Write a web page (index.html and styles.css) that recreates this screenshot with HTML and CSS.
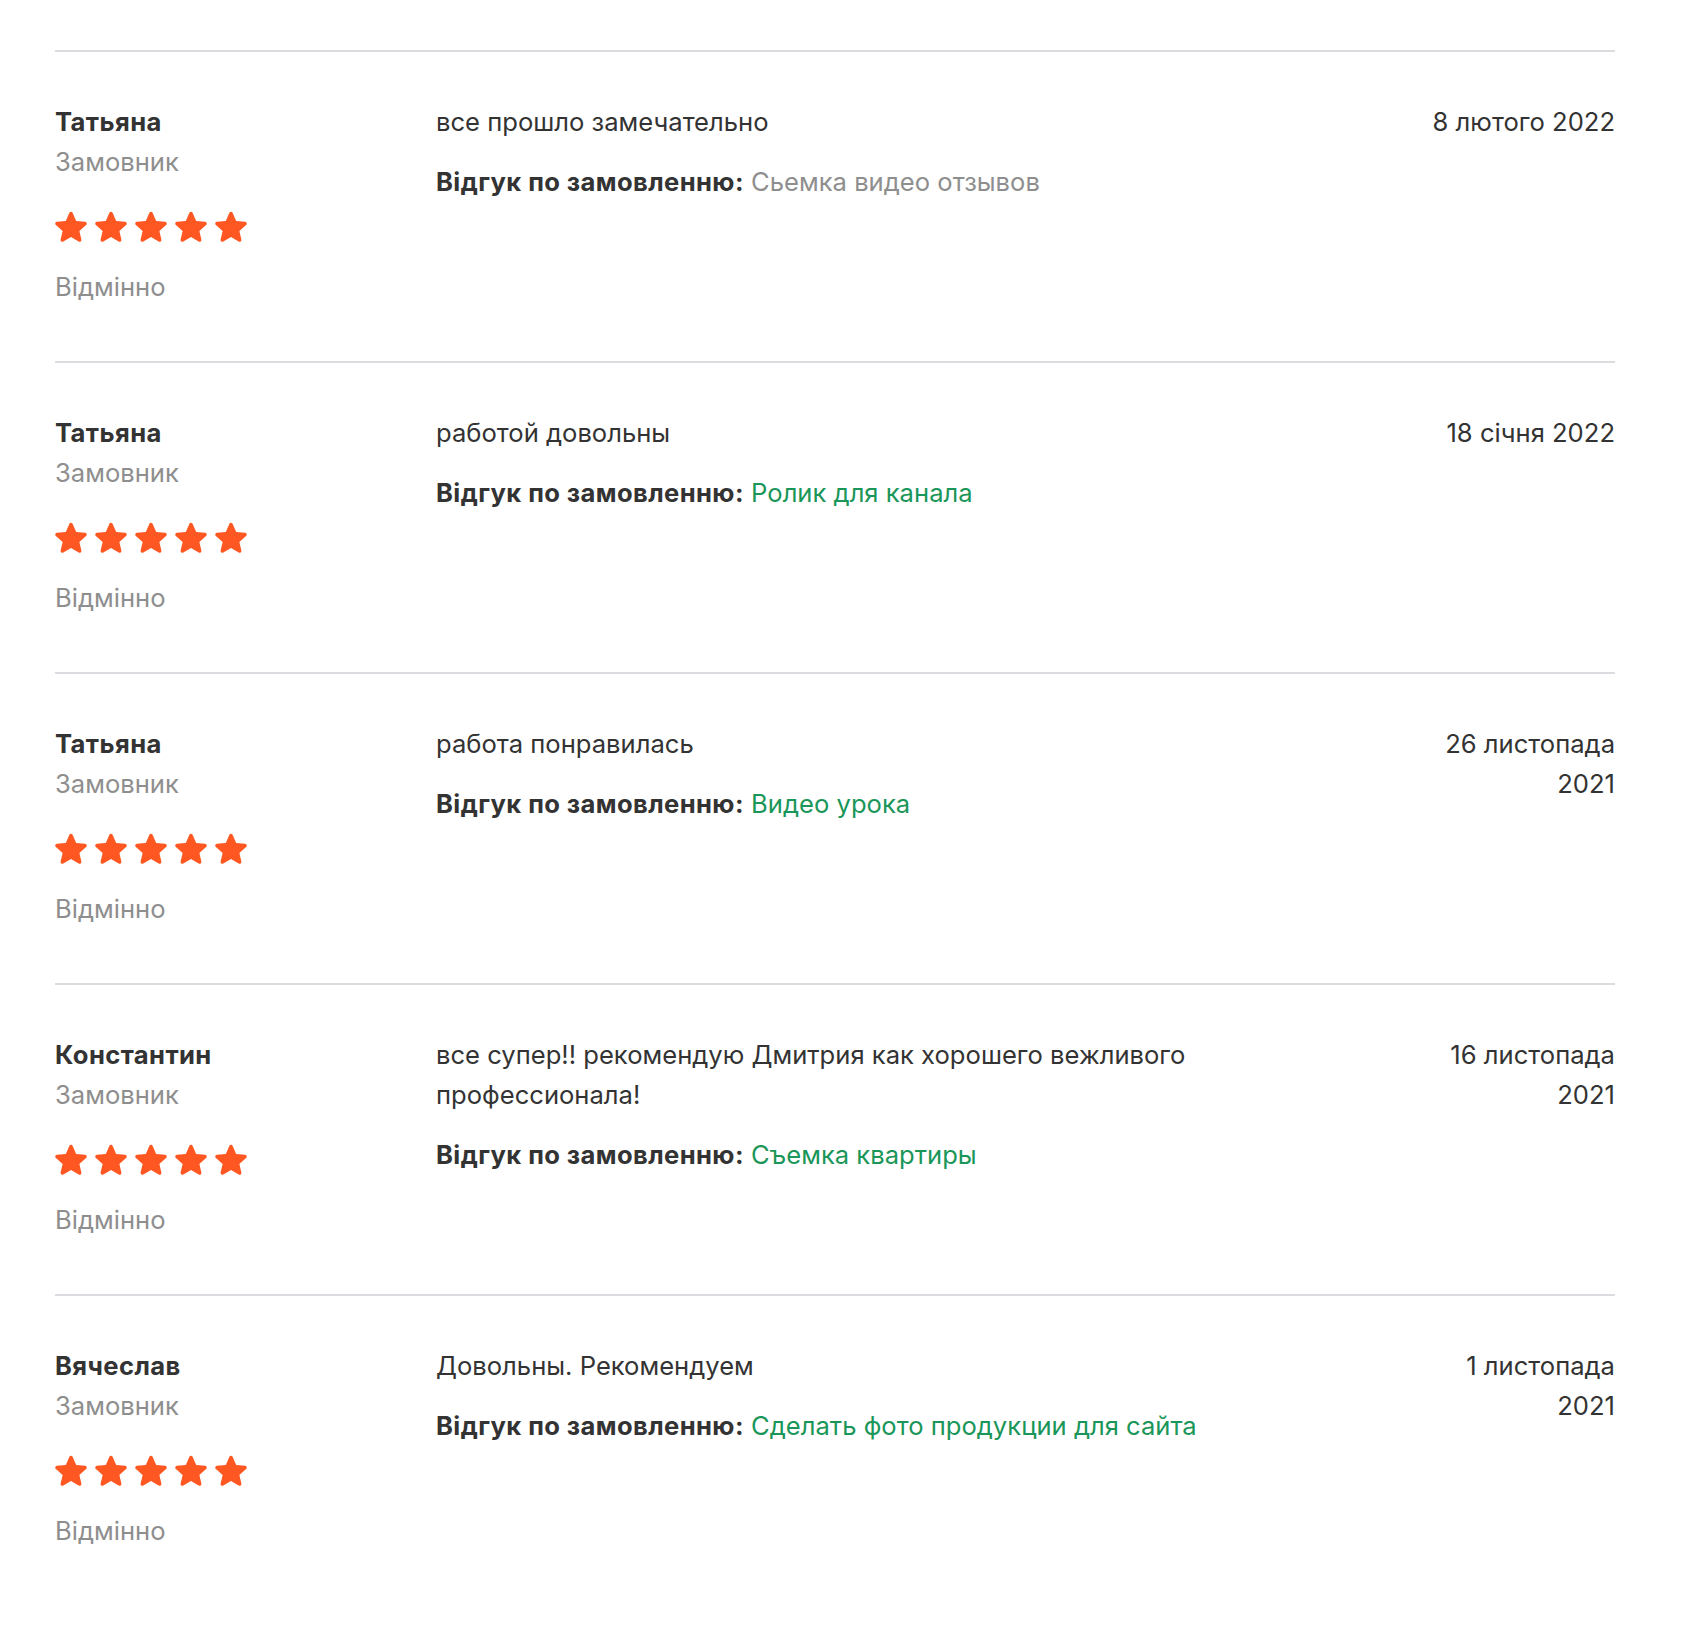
FILE: index.html
```html
<!DOCTYPE html>
<html lang="uk">
<head>
<meta charset="utf-8">
<title>Відгуки</title>
<link rel="stylesheet" href="styles.css">
</head>
<body>
<svg class="defs" width="0" height="0" aria-hidden="true">
  <defs>
    <symbol id="star" viewBox="3.4 2.6 17.2 17.4">
      <path d="M12 17.27l4.15 2.51c.76.46 1.690-.22 1.49-1.08l-1.1-4.72 3.67-3.18c.67-.58.31-1.68-.57-1.75l-4.83-.41-1.890-4.46c-.34-.81-1.5-.81-1.84 0L9.19 8.63l-4.83.41c-.88.07-1.24 1.17-.57 1.75l3.67 3.18-1.1 4.72c-.2.86.73 1.54 1.49 1.08l4.15-2.5z"/>
    </symbol>
  </defs>
</svg>
<div class="reviews">
  <div class="review">
    <div class="author">
      <div class="name">Татьяна</div>
      <div class="role">Замовник</div>
      <div class="stars"><svg class="star"><use href="#star"/></svg><svg class="star"><use href="#star"/></svg><svg class="star"><use href="#star"/></svg><svg class="star"><use href="#star"/></svg><svg class="star"><use href="#star"/></svg></div>
      <div class="grade">Відмінно</div>
    </div>
    <div class="body">
      <div class="text">все прошло замечательно</div>
      <div class="order"><b>Відгук по замовленню:</b> <span class="muted">Сьемка видео отзывов</span></div>
    </div>
    <div class="date">8 лютого 2022</div>
  </div>

  <div class="review">
    <div class="author">
      <div class="name">Татьяна</div>
      <div class="role">Замовник</div>
      <div class="stars"><svg class="star"><use href="#star"/></svg><svg class="star"><use href="#star"/></svg><svg class="star"><use href="#star"/></svg><svg class="star"><use href="#star"/></svg><svg class="star"><use href="#star"/></svg></div>
      <div class="grade">Відмінно</div>
    </div>
    <div class="body">
      <div class="text">работой довольны</div>
      <div class="order"><b>Відгук по замовленню:</b> <a class="link" href="#">Ролик для канала</a></div>
    </div>
    <div class="date">18 січня 2022</div>
  </div>

  <div class="review">
    <div class="author">
      <div class="name">Татьяна</div>
      <div class="role">Замовник</div>
      <div class="stars"><svg class="star"><use href="#star"/></svg><svg class="star"><use href="#star"/></svg><svg class="star"><use href="#star"/></svg><svg class="star"><use href="#star"/></svg><svg class="star"><use href="#star"/></svg></div>
      <div class="grade">Відмінно</div>
    </div>
    <div class="body">
      <div class="text">работа понравилась</div>
      <div class="order"><b>Відгук по замовленню:</b> <a class="link" href="#">Видео урока</a></div>
    </div>
    <div class="date">26 листопада 2021</div>
  </div>

  <div class="review">
    <div class="author">
      <div class="name">Константин</div>
      <div class="role">Замовник</div>
      <div class="stars"><svg class="star"><use href="#star"/></svg><svg class="star"><use href="#star"/></svg><svg class="star"><use href="#star"/></svg><svg class="star"><use href="#star"/></svg><svg class="star"><use href="#star"/></svg></div>
      <div class="grade">Відмінно</div>
    </div>
    <div class="body">
      <div class="text">все супер!! рекомендую Дмитрия как хорошего вежливого профессионала!</div>
      <div class="order"><b>Відгук по замовленню:</b> <a class="link" href="#">Съемка квартиры</a></div>
    </div>
    <div class="date">16 листопада 2021</div>
  </div>

  <div class="review">
    <div class="author">
      <div class="name">Вячеслав</div>
      <div class="role">Замовник</div>
      <div class="stars"><svg class="star"><use href="#star"/></svg><svg class="star"><use href="#star"/></svg><svg class="star"><use href="#star"/></svg><svg class="star"><use href="#star"/></svg><svg class="star"><use href="#star"/></svg></div>
      <div class="grade">Відмінно</div>
    </div>
    <div class="body">
      <div class="text">Довольны. Рекомендуем</div>
      <div class="order"><b>Відгук по замовленню:</b> <a class="link" href="#">Сделать фото продукции для сайта</a></div>
    </div>
    <div class="date">1 листопада 2021</div>
  </div>
</div>
</body>
</html>
```

FILE: styles.css
```css
html, body {
  margin: 0;
  padding: 0;
  background: #ffffff;
}

body {
  font-family: Inter, "Noto Sans", "DejaVu Sans", sans-serif;
  font-size: 25.6px;
  line-height: 40px;
  color: #333333;
}

.defs {
  position: absolute;
  width: 0;
  height: 0;
  overflow: hidden;
}

.reviews {
  width: 1560px;
  padding: 50px 0 0 55px;
}

.review {
  display: grid;
  grid-template-columns: 381px 1fr 200px;
  border-top: 2px solid #dcdce0;
  padding: 50px 0 54px;
}

.author {
  display: flex;
  flex-direction: column;
}

.name {
  font-weight: 700;
  letter-spacing: 0.4px;
}

.role,
.grade {
  color: #8e8e8e;
}

.stars {
  display: flex;
  gap: 8px;
  margin: 28px 0 25px;
}

.star {
  width: 32px;
  height: 32px;
  fill: #ff5722;
}

.body {
  padding-right: 40px;
}

.order {
  margin-top: 20px;
}

.order b {
  font-weight: 700;
  letter-spacing: 0.4px;
}

.muted {
  color: #8e8e8e;
}

.link {
  color: #1a9659;
  text-decoration: none;
}

.date {
  text-align: right;
}
```
